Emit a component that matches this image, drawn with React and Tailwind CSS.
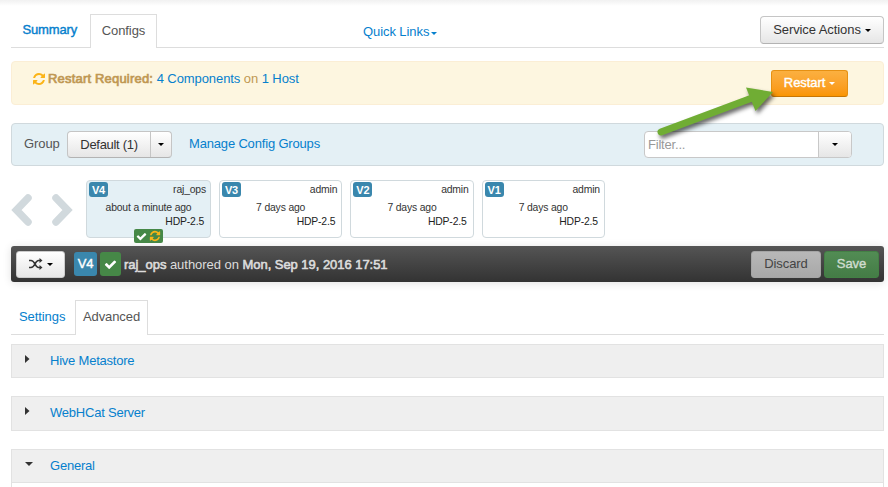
import React from "react";

const REFRESH =
  "M1639 1056q0 5-1 7-64 268-268 434.5t-478 166.5q-146 0-282.5-55t-243.5-157l-129 129q-19 19-45 19t-45-19-19-45v-448q0-26 19-45t45-19h448q26 0 45 19t19 45-19 45l-137 137q71 66 161 102t187 36q134 0 250-65t186-179q11-17 53-117 8-23 30-23h192q13 0 22.5 9.5t9.5 22.5zm25-800v448q0 26-19 45t-45 19h-448q-26 0-45-19t-19-45 19-45l138-138q-148-137-349-137-134 0-250 65t-186 179q-11 17-53 117-8 23-30 23h-199q-13 0-22.5-9.5t-9.5-22.5v-7q65-268 270-434.5t480-166.5q146 0 284 55.5t245 156.5l130-129q19-19 45-19t45 19 19 45z";
const CHECK =
  "M1671 566q0 40-28 68l-724 724-136 136q-28 28-68 28t-68-28l-136-136-362-362q-28-28-28-68t28-68l136-136q28-28 68-28t68 28l294 295 656-657q28-28 68-28t68 28l136 136q28 28 28 68z";

function Glyph({ d, className }) {
  return (
    <svg viewBox="0 0 1792 1792" fill="currentColor" className={`shrink-0 ${className}`}>
      <path d={d} />
    </svg>
  );
}

function Caret({ className = "" }) {
  return (
    <svg viewBox="0 0 6 3" fill="currentColor" className={`h-[3px] w-[6px] shrink-0 ${className}`}>
      <path d="M0 0h6L3 3z" />
    </svg>
  );
}

function Chevron({ flip }) {
  return (
    <svg
      viewBox="0 0 22 34"
      className={`h-[34px] w-[22px] ${flip ? "-scale-x-100" : ""}`}
      fill="none"
      stroke="#d1d9dd"
      strokeWidth="7.500"
      strokeLinecap="round"
    >
      <path d="M17 5 5.500 17 17 29" />
    </svg>
  );
}

function Shuffle() {
  return (
    <svg viewBox="0 0 14 12" className="h-3 w-3.5" fill="none" stroke="#333" strokeWidth="1.5">
      <path d="M0 2.500h2C6 2.500 6 9.500 9.500 9.500H11M0 9.500h2C6 9.500 6 2.500 9.500 2.500H11" />
      <path d="M10.500 0 13.500 2.500l-3 2.500zM10.500 7 13.500 9.500l-3 2.500z" fill="#333" stroke="none" />
    </svg>
  );
}

const versions = [
  { v: "V4", user: "raj_ops", when: "about a minute ago", current: true },
  { v: "V3", user: "admin", when: "7 days ago" },
  { v: "V2", user: "admin", when: "7 days ago" },
  { v: "V1", user: "admin", when: "7 days ago" },
];

function VersionCard({ v, user, when, current }) {
  return (
    <div
      className={`relative h-[58px] rounded-[4px] border border-[#d0d9dd] text-[10.4px] leading-[14px] tracking-[-0.17px] text-[#333] ${
        current ? "w-[125px] bg-[#e4f0f5]" : "w-[123.3px] bg-white"
      }`}
    >
      <div className="flex justify-between pt-[1px] pr-[4px] pl-[2px]">
        <span className="flex h-[15px] w-[19px] items-center justify-center rounded-[3px] bg-[#3a87ad] text-[11px] font-bold text-white">
          {v}
        </span>
        <span className="pt-[1px]">{user}</span>
      </div>
      <div className="mt-[4px] text-center">{when}</div>
      <div className="pr-[6px] text-right text-[#222]">HDP-2.5</div>
      {current && (
        <div className="absolute top-[48px] left-[47px] flex h-[14px] w-[29px] items-center justify-center gap-[2px] rounded-[2px] bg-[#468847] text-white">
          <Glyph d={CHECK} className="size-[11px]" />
          <Glyph d={REFRESH} className="size-[12px] text-[#fbb417]" />
        </div>
      )}
    </div>
  );
}

function Panel({ title, open, className }) {
  return (
    <div
      className={`flex items-start border border-[#e2e2e2] bg-[#efefef] text-[13px] leading-[18px] tracking-[-0.22px] text-[#0680cd] ${className}`}
    >
      <span className="flex w-[38px] pt-[10px] pl-[13px]">
        {open ? (
          <svg viewBox="0 0 8 4" className="mt-[2px] h-1 w-2" fill="#333">
            <path d="M0 0h8L4 4z" />
          </svg>
        ) : (
          <svg viewBox="0 0 5 8" className="h-[8px] w-[5px]" fill="#333">
            <path d="M0 0v8l4.500-4z" />
          </svg>
        )}
      </span>
      <span className="pt-[7px]">{title}</span>
    </div>
  );
}

export default function App() {
  return (
    <div className="relative h-[487px] w-[888px] overflow-hidden bg-white pr-[4px] pl-[11px] font-['Liberation_Sans',Arial,sans-serif] text-[13px] leading-[18px] tracking-[-0.08px] text-[#333]">
      <div className="absolute inset-x-0 top-0 h-[6px] bg-linear-to-b from-[#f1f1f1] to-white" />

      <div className="flex h-[48px] items-end border-b border-[#ddd]">
        <div className="h-[34px] w-[79px] pt-[8px] pl-[11.500px] tracking-[-0.15px] text-[#0680cd] [-webkit-text-stroke:0.4px_#0680cd]">
          Summary
        </div>
        <div className="-mb-px h-[34px] w-[67px] border border-b-0 border-[#ddd] bg-white pt-[7px] text-center text-[#555]">
          Configs
        </div>
        <div className="ml-[206px] flex h-[34px] items-start pt-[10px] text-[#0680cd]">
          Quick Links
          <Caret className="mt-[9px] ml-[2px]" />
        </div>
        <button className="mb-[3px] ml-auto flex h-[28px] w-[124px] items-center justify-center gap-[4px] rounded-[4px] border border-[#c5c5c5] border-b-[#b3b3b3] bg-linear-to-b from-white to-[#e6e6e6] text-[#333]">
          Service Actions
          <Caret className="text-black" />
        </button>
      </div>

      <div className="mt-[13px] flex h-[44px] items-start rounded-[4px] border border-[#fbeed5] bg-[#fdf6e0] pr-[35px] pl-[20px] text-[#c09853]">
        <Glyph d={REFRESH} className="mt-[10px] mr-[2px] size-[14px] text-[#fbb417]" />
        <div className="pt-[8px]">
          <span className="tracking-[0.19px] [-webkit-text-stroke:0.7px_#c09853]">Restart Required:</span>{" "}
          <span className="text-[#0680cd]">4 Components</span> on <span className="text-[#0680cd]">1 Host</span>
        </div>
        <button className="mt-[8px] ml-auto flex h-[27px] w-[77px] items-center justify-center gap-[4px] rounded-[3px] border border-[#e69012] border-b-[#c67605] bg-linear-to-b from-[#fbb040] to-[#fa9500] pb-px text-white [-webkit-text-stroke:0.4px_white]">
          Restart
          <Caret />
        </button>
      </div>

      <div className="mt-[18px] flex h-[43px] items-center rounded-[4px] border border-[#d0d9dd] bg-[#e4f0f5] pr-[31px] pl-[12px]">
        <span className="w-[43px] pb-px text-[#555]">Group</span>
        <div className="flex h-[27px] w-[105px] rounded-[4px] border border-[#c5c5c5] border-b-[#b3b3b3] bg-linear-to-b from-white to-[#e6e6e6] tracking-[-0.3px] text-[#333]">
          <span className="flex w-[83px] items-center justify-center border-r border-[#c5c5c5]">Default (1)</span>
          <span className="flex flex-1 items-center justify-center">
            <Caret className="text-black" />
          </span>
        </div>
        <span className="ml-[17px] pb-px tracking-[-0.17px] text-[#0680cd]">Manage Config Groups</span>
        <div className="ml-auto flex h-[27px] w-[208px] rounded-[4px] border border-[#c8c8c8] bg-white">
          <span className="flex w-[174px] items-center border-r border-[#c8c8c8] pl-[3px] tracking-[-0.2px] text-[#999]">
            Filter...
          </span>
          <span className="flex flex-1 items-center justify-center rounded-r-[3px] bg-linear-to-b from-white to-[#e6e6e6]">
            <Caret className="text-black" />
          </span>
        </div>
      </div>

      <div className="mt-[14px] flex h-[58px]">
        <div className="flex w-[75px] items-start gap-[18px] pt-[13px]">
          <Chevron />
          <Chevron flip />
        </div>
        <div className="flex gap-[8px]">
          {versions.map((item) => (
            <VersionCard key={item.v} {...item} />
          ))}
        </div>
      </div>

      <div className="mt-[8px] flex h-[36px] items-center rounded-[3px] bg-linear-to-b from-[#555] to-[#333] px-[5px] shadow-[0_1px_8px_rgba(0,0,0,0.12)]">
        <button className="flex h-[27px] w-[49px] items-center justify-center gap-[4px] rounded-[3px] border border-[#ccc] bg-linear-to-b from-white to-[#e6e6e6]">
          <Shuffle />
          <Caret className="text-black" />
        </button>
        <span className="ml-[9px] flex h-[24px] w-[23px] items-center justify-center rounded-[3px] bg-[#3a87ad] text-white [-webkit-text-stroke:0.4px_white]">
          V4
        </span>
        <span className="ml-[3px] flex h-[24px] w-[21px] items-center justify-center rounded-[3px] bg-[#468847] text-white">
          <Glyph d={CHECK} className="size-[13px]" />
        </span>
        <span className="ml-[3px] pt-px tracking-[-0.04px] text-[#dcdcdc]">
          <span className="[-webkit-text-stroke:0.6px_#dcdcdc]">raj_ops</span> authored on{" "}
          <span className="[-webkit-text-stroke:0.6px_#dcdcdc]">Mon, Sep 19, 2016 17:51</span>
        </span>
        <button className="ml-auto h-[27px] w-[70px] rounded-[3px] border border-[#a5a5a5] bg-linear-to-b from-[#b8b8b8] to-[#a8a8a8] pb-px text-[#444]">
          Discard
        </button>
        <button className="ml-[3px] h-[27px] w-[55px] rounded-[3px] border border-[#438045] bg-linear-to-b from-[#528c54] to-[#447c46] pb-px text-[#cfdccf] [-webkit-text-stroke:0.4px_#cfdccf]">
          Save
        </button>
      </div>

      <div className="mt-[18px] flex h-[35px] items-end border-b border-[#ddd]">
        <div className="h-[34px] w-[64px] pt-[8px] pl-[8px] text-[#0680cd]">Settings</div>
        <div className="-mb-px h-[35px] w-[73px] border border-b-0 border-[#ddd] bg-white pt-[7px] text-center text-[#555]">
          Advanced
        </div>
      </div>

      <Panel title="Hive Metastore" className="mt-[9px] h-[34px]" />
      <Panel title="WebHCat Server" className="mt-[18px] h-[35px]" />
      <Panel title="General" open className="mt-[18px] h-[34px]" />
      <div className="h-[6px] border-x border-[#e2e2e2]" />

      <svg
        viewBox="0 0 140 70"
        className="absolute top-[76px] left-[646px] h-[70px] w-[140px] drop-shadow-[2px_3px_2px_rgba(0,0,0,0.6)]"
      >
        <path d="M15 56 106 22" stroke="#70ad34" strokeWidth="7" strokeLinecap="round" />
        <path d="M100 11.500 127 16 109.500 35z" fill="#70ad34" />
      </svg>
    </div>
  );
}
